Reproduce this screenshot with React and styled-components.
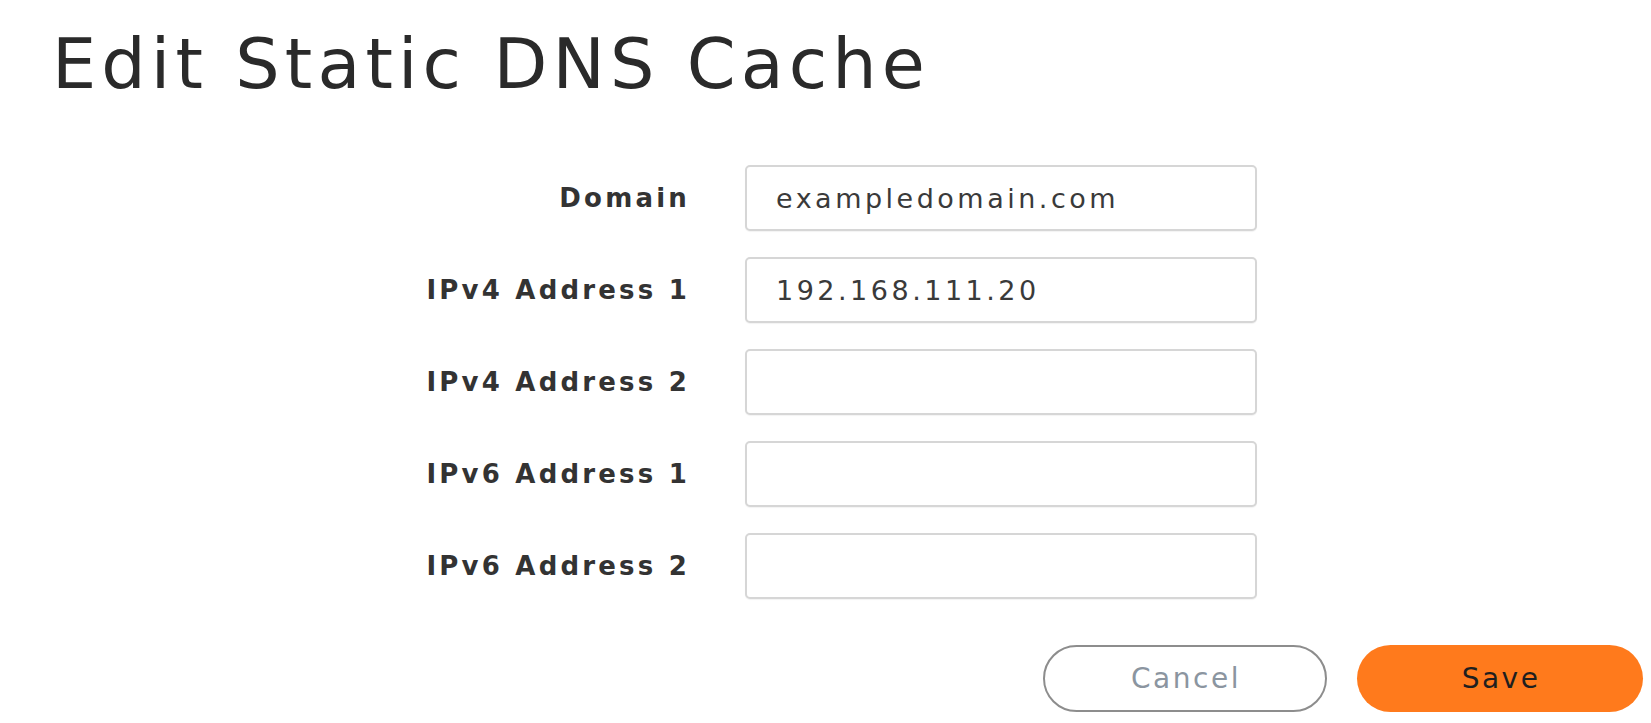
import React from "react";
import styled, { createGlobalStyle } from "styled-components";

const Global = createGlobalStyle`
  html, body { margin: 0; padding: 0; background: #ffffff; }
  body { font-family: "DejaVu Sans", "Open Sans", sans-serif; color: #333; }
  * { box-sizing: border-box; }
`;

const Page = styled.div`
  width: 1651px;
  height: 723px;
  padding: 0 8px 0 52px;
  display: flex;
  flex-direction: column;
`;

const Title = styled.h1`
  margin: 22px 0 0 0;
  font-family: "DejaVu Sans", sans-serif;
  font-weight: 400;
  font-size: 70px;
  line-height: 84px;
  letter-spacing: 5.1px;
  color: #2a2a2a;
  white-space: nowrap;
`;

const Form = styled.div`
  margin-top: 59px;
  display: grid;
  grid-template-columns: 635px 512px;
  column-gap: 58px;
  row-gap: 26px;
  align-items: center;
`;

const Label = styled.label`
  text-align: right;
  font-family: "DejaVu Sans", sans-serif;
  font-weight: 700;
  font-size: 26px;
  letter-spacing: 3.2px;
  margin-right: -3px;
  color: #333333;
  white-space: nowrap;
`;

const Input = styled.input`
  width: 512px;
  height: 66px;
  border: 2px solid #d6d6d6;
  border-radius: 5px;
  padding: 0 0 0 29px;
  font-family: "DejaVu Sans", sans-serif;
  font-size: 27px;
  letter-spacing: 3.5px;
  color: #3a3a3a;
  background: #fff;
  box-shadow: 0 1px 1px rgba(0, 0, 0, 0.05);
  outline: none;
`;

const Actions = styled.div`
  margin-top: 46px;
  display: flex;
  justify-content: flex-end;
  gap: 30px;
`;

const Button = styled.button`
  width: ${(p) => (p.$primary ? "286px" : "284px")};
  height: 67px;
  border-radius: 34px;
  border: ${(p) => (p.$primary ? "none" : "2px solid #8d8d8d")};
  background: ${(p) => (p.$primary ? "#ff7a1c" : "#ffffff")};
  color: ${(p) => (p.$primary ? "#1f1f1f" : "#8b95a0")};
  font-family: "DejaVu Sans", sans-serif;
  font-size: 28px;
  letter-spacing: 2.5px;
  padding: 0 0 0 2px;
  cursor: pointer;
`;

const fields = [
  { label: "Domain", value: "exampledomain.com" },
  { label: "IPv4 Address 1", value: "192.168.111.20" },
  { label: "IPv4 Address 2", value: "" },
  { label: "IPv6 Address 1", value: "" },
  { label: "IPv6 Address 2", value: "" },
];

export default function App() {
  return (
    <>
      <Global />
      <Page>
        <Title>Edit Static DNS Cache</Title>
        <Form>
          {fields.map((f) => (
            <React.Fragment key={f.label}>
              <Label>{f.label}</Label>
              <Input defaultValue={f.value} />
            </React.Fragment>
          ))}
        </Form>
        <Actions>
          <Button>Cancel</Button>
          <Button $primary>Save</Button>
        </Actions>
      </Page>
    </>
  );
}
